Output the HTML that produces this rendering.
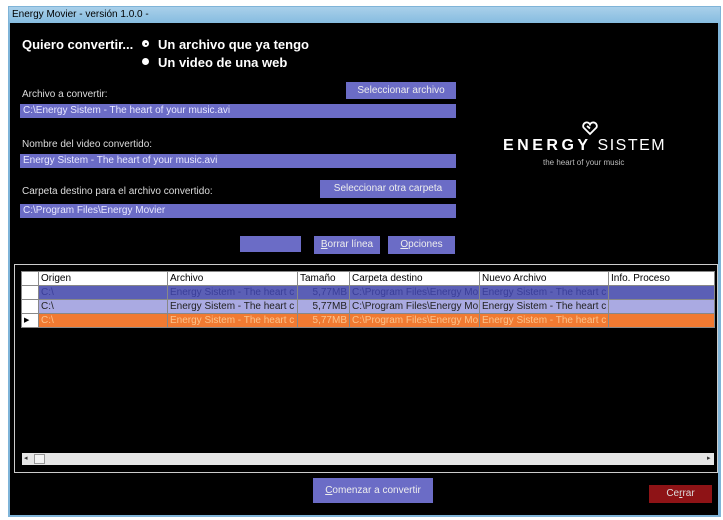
<!DOCTYPE html>
<html><head><meta charset="utf-8"><style>
body{margin:0;width:723px;height:520px;background:#fff;position:relative;overflow:hidden;font-family:"Liberation Sans",sans-serif;}
.a{position:absolute}
.win{left:8px;top:6px;width:713px;height:511px;background:#7fb4d8;}
.title{left:9px;top:7px;width:711px;height:16px;background:linear-gradient(#a9d0ea,#86bce0);font-size:10px;line-height:16px;color:#000;padding-left:3px;box-sizing:border-box}
.body{left:10px;top:23px;width:708px;height:492px;background:#000}
.lbl{color:#ddd;font-size:10px}
.inp{background:#6b6cc6;color:#e8e8ff;font-size:10px;line-height:14px;padding-left:3px;box-sizing:border-box;height:14px}
.btn{background:#6b6cc6;color:#eee;font-size:10px;text-align:center;box-sizing:border-box}
table{border-collapse:collapse;font-size:10px;table-layout:fixed}
td{border:1px solid #888;height:13px;padding:0 2px;white-space:nowrap;overflow:hidden;line-height:12px}
</style></head><body>
<div class="a win"></div>
<div class="a title">Energy Movier - versión 1.0.0 -</div>
<div class="a body"></div>
<div class="a" style="left:22px;top:37px;color:#fff;font-size:13px;font-weight:bold">Quiero convertir...</div>
<div class="a" style="left:142px;top:40px;width:7px;height:7px;border-radius:50%;background:#fff"></div>
<div class="a" style="left:144.5px;top:42.5px;width:2px;height:2px;border-radius:50%;background:#000"></div>
<div class="a" style="left:158px;top:37px;color:#fff;font-size:13px;font-weight:bold">Un archivo que ya tengo</div>
<div class="a" style="left:142px;top:58px;width:7px;height:7px;border-radius:50%;background:#fff"></div>
<div class="a" style="left:158px;top:55px;color:#fff;font-size:13px;font-weight:bold">Un video de una web</div>
<div class="a lbl" style="left:22px;top:89px">Archivo a convertir:</div>
<div class="a btn" style="left:346px;top:82px;width:110px;height:17px;line-height:17px">Seleccionar archivo</div>
<div class="a inp" style="left:20px;top:104px;width:436px">C:\Energy Sistem - The heart of your music.avi</div>
<div class="a lbl" style="left:22px;top:139px">Nombre del video convertido:</div>
<div class="a inp" style="left:20px;top:154px;width:436px">Energy Sistem - The heart of your music.avi</div>
<div class="a lbl" style="left:22px;top:186px">Carpeta destino para el archivo convertido:</div>
<div class="a btn" style="left:320px;top:180px;width:136px;height:18px;line-height:18px">Seleccionar otra carpeta</div>
<div class="a inp" style="left:20px;top:204px;width:436px">C:\Program Files\Energy Movier</div>
<div class="a btn" style="left:240px;top:236px;width:61px;height:16px"></div>
<div class="a btn" style="left:314px;top:236px;width:66px;height:18px;line-height:18px"><u>B</u>orrar línea</div>
<div class="a btn" style="left:388px;top:236px;width:67px;height:18px;line-height:18px"><u>O</u>pciones</div>
<svg class="a" style="left:581px;top:121px" width="18" height="15" viewBox="0 0 18 15"><path d="M9 13 L2.5 6.5 A3.3 3.3 0 0 1 9 3.5 A3.3 3.3 0 0 1 15.5 6.5 Z M9 7.5 L6 5" fill="none" stroke="#fff" stroke-width="1.8"/></svg>
<div class="a" style="left:503px;top:137px;color:#fff;font-size:16px;letter-spacing:1.5px;white-space:nowrap"><b style="letter-spacing:3.5px">ENERGY</b> SISTEM</div>
<div class="a" style="left:543px;top:158px;color:#bbb;font-size:8px">the heart of your music</div>
<div class="a" style="left:14px;top:264px;width:704px;height:209px;border:1px solid #ccc;box-sizing:border-box;background:#000"></div>
<div class="a" style="left:21px;top:271px">
<table style="width:693px">
<colgroup><col style="width:17px"><col style="width:129px"><col style="width:130px"><col style="width:52px"><col style="width:130px"><col style="width:129px"><col style="width:106px"></colgroup>
<tr style="background:#fff;color:#000"><td></td><td>Origen</td><td>Archivo</td><td>Tamaño</td><td>Carpeta destino</td><td>Nuevo Archivo</td><td>Info. Proceso</td></tr>
<tr style="background:#5b5fb6;color:#3a3e98"><td style="background:#fff"></td><td>C:\</td><td>Energy Sistem - The heart c</td><td style="text-align:right">5,77MB</td><td>C:\Program Files\Energy Mo</td><td>Energy Sistem - The heart c</td><td></td></tr>
<tr style="background:#aaaae2;color:#222"><td style="background:#fff"></td><td>C:\</td><td>Energy Sistem - The heart c</td><td style="text-align:right">5,77MB</td><td>C:\Program Files\Energy Mo</td><td>Energy Sistem - The heart c</td><td></td></tr>
<tr style="background:#f17a32;color:#fbc48c"><td style="background:#fff;color:#000;font-size:7px">▶</td><td>C:\</td><td>Energy Sistem - The heart c</td><td style="text-align:right">5,77MB</td><td>C:\Program Files\Energy Mo</td><td>Energy Sistem - The heart c</td><td></td></tr>
</table></div>
<div class="a" style="left:22px;top:453px;width:692px;height:12px;background:#e6e6e6"></div>
<div class="a" style="left:24px;top:453px;font-size:7px;line-height:12px;color:#333">◂</div>
<div class="a" style="left:707px;top:453px;font-size:7px;line-height:12px;color:#333">▸</div>
<div class="a" style="left:34px;top:454px;width:11px;height:10px;background:#f4f4f4;border:1px solid #999;box-sizing:border-box"></div>
<div class="a btn" style="top:478px;height:25px;line-height:25px;left:313px;width:120px"><u>C</u>omenzar a convertir</div>
<div class="a" style="left:649px;top:485px;width:63px;height:18px;background:#8e1316;color:#ddd;font-size:10px;text-align:center;line-height:18px">Ce<u>r</u>rar</div>
</body></html>
